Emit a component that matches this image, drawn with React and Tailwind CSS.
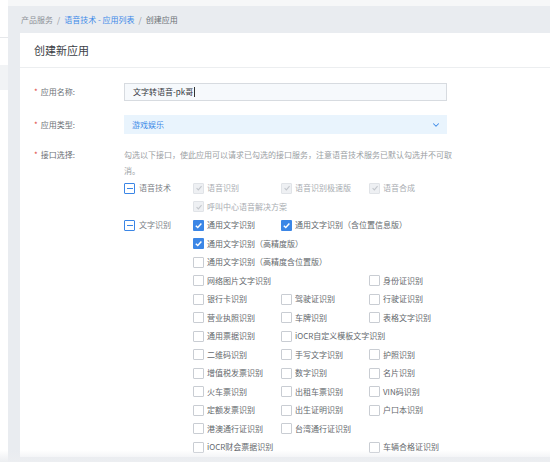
import React from 'react';
import { ChevronDown } from 'lucide-react';

const FONT = { fontFamily: '"Noto Sans CJK SC", "Noto Sans", sans-serif' };

// s: 'on' checked, 'off' unchecked, 'dis' disabled+checked
const VOICE = [
  [{ t: '语音识别', s: 'dis' }, { t: '语音识别极速版', s: 'dis' }, { t: '语音合成', s: 'dis' }],
  [{ t: '呼叫中心语音解决方案', s: 'dis' }, null, null],
];

const OCR = [
  [{ t: '通用文字识别', s: 'on' }, { t: '通用文字识别（含位置信息版）', s: 'on' }, null],
  [{ t: '通用文字识别（高精度版）', s: 'on' }, null, null],
  [{ t: '通用文字识别（高精度含位置版）', s: 'off' }, null, null],
  [{ t: '网络图片文字识别', s: 'off' }, null, { t: '身份证识别', s: 'off' }],
  [{ t: '银行卡识别', s: 'off' }, { t: '驾驶证识别', s: 'off' }, { t: '行驶证识别', s: 'off' }],
  [{ t: '营业执照识别', s: 'off' }, { t: '车牌识别', s: 'off' }, { t: '表格文字识别', s: 'off' }],
  [{ t: '通用票据识别', s: 'off' }, { t: 'iOCR自定义模板文字识别', s: 'off' }, null],
  [{ t: '二维码识别', s: 'off' }, { t: '手写文字识别', s: 'off' }, { t: '护照识别', s: 'off' }],
  [{ t: '增值税发票识别', s: 'off' }, { t: '数字识别', s: 'off' }, { t: '名片识别', s: 'off' }],
  [{ t: '火车票识别', s: 'off' }, { t: '出租车票识别', s: 'off' }, { t: 'VIN码识别', s: 'off' }],
  [{ t: '定额发票识别', s: 'off' }, { t: '出生证明识别', s: 'off' }, { t: '户口本识别', s: 'off' }],
  [{ t: '港澳通行证识别', s: 'off' }, { t: '台湾通行证识别', s: 'off' }, null],
  [{ t: 'iOCR财会票据识别', s: 'off' }, null, { t: '车辆合格证识别', s: 'off' }],
];

function Box({ s }) {
  if (s === 'on') {
    return (
      <span className="w-[11px] h-[11px] shrink-0 rounded-[1px] bg-[#3b86e6] flex items-center justify-center">
        <svg viewBox="0 0 10 10" className="w-[9px] h-[9px]">
          <path d="M2 5.2 L4.2 7.3 L8.2 2.8" fill="none" stroke="#fff" strokeWidth="1.6" />
        </svg>
      </span>
    );
  }
  if (s === 'dis') {
    return (
      <span className="w-[11px] h-[11px] shrink-0 rounded-[1px] bg-[#eef0f3] border border-[#e0e3e7] flex items-center justify-center">
        <svg viewBox="0 0 10 10" className="w-[8px] h-[8px]">
          <path d="M2 5.2 L4.2 7.3 L8.2 2.8" fill="none" stroke="#c3c7cc" strokeWidth="1.4" />
        </svg>
      </span>
    );
  }
  return <span className="w-[11px] h-[11px] shrink-0 rounded-[1px] border border-[#c9cdd3] bg-white" />;
}

function Item({ it }) {
  if (!it) return <div />;
  return (
    <div className="flex items-center gap-[3px] whitespace-nowrap">
      <Box s={it.s} />
      <span className={it.s === 'dis' ? 'text-[#a8acb1]' : 'text-[#63676c]'}>{it.t}</span>
    </div>
  );
}

function Group({ name, rows }) {
  return (
    <div className="flex">
      <div className="w-[69px] shrink-0 h-[18.5px] flex items-center gap-[4px]">
        <span className="w-[11px] h-[11px] border border-[#3b86e6] rounded-[1px] flex items-center justify-center">
          <span className="w-[6px] h-[1.5px] bg-[#3b86e6]" />
        </span>
        <span className="text-[#7b8086]">{name}</span>
      </div>
      <div className="flex flex-col">
        {rows.map((r, i) => (
          <div key={i} className="grid grid-cols-[88px_88px_88px] h-[18.5px] shrink-0 items-center">
            {r.map((it, j) => <Item key={j} it={it} />)}
          </div>
        ))}
      </div>
    </div>
  );
}

function Label({ children }) {
  return (
    <div className="w-[90px] shrink-0 flex items-center text-[#6b7076]">
      <span className="text-[#e0473f] mr-[3px]">*</span>
      {children}
    </div>
  );
}

export default function App() {
  return (
    <div className="relative w-[550px] h-[462px] overflow-hidden flex bg-[#e9ecf0] text-[8px]" style={FONT}>
      {/* sidebar sliver */}
      <div className="w-[8px] shrink-0 bg-white flex flex-col">
        <div className="h-[38px] shrink-0 border-b border-[#e6e8eb]" />
        <div className="h-[27px] shrink-0" />
        <div className="h-[25px] shrink-0 bg-[#f1f3f5]" />
      </div>

      <div className="flex-1 flex flex-col min-w-0">
        <div className="h-[6px] shrink-0 bg-[#f6f7f8]" />
        <div className="h-[27px] shrink-0 flex items-center pl-[13px] gap-[4px] text-[#8d9197]">
          <span>产品服务</span>
          <span>/</span>
          <span className="text-[#3d8ae8]">语音技术 - 应用列表</span>
          <span>/</span>
          <span className="text-[#6b7076]">创建应用</span>
        </div>

        <div className="ml-[12px] shrink-0 bg-white">
          <div className="h-[35px] flex items-center pl-[14px] border-b border-[#eceef0] text-[11px] text-[#3c4046]">
            创建新应用
          </div>

          <div className="pl-[14px] pt-[15px] flex flex-col">
            <div className="flex h-[18px] shrink-0">
              <Label>应用名称:</Label>
              <div className="w-[323px] border border-[#d7dbe0] bg-[#f6f9fc] flex items-center pl-[8px] text-[#33373c]">
                文字转语音-pk哥<span className="w-[1px] h-[10px] bg-[#333] ml-[1px]" />
              </div>
            </div>

            <div className="flex h-[19px] shrink-0 mt-[14px]">
              <Label>应用类型:</Label>
              <div className="w-[323px] bg-[#e9f4fd] flex items-center justify-between pl-[8px] pr-[6px] text-[#3d8ae8]">
                游戏娱乐
                <ChevronDown className="w-[10px] h-[10px] text-[#3d8ae8]" strokeWidth={2.5} />
              </div>
            </div>

            <div className="flex mt-[13px]">
              <div className="w-[90px] shrink-0 h-[16px] flex items-center text-[#6b7076]">
                <span className="text-[#e0473f] mr-[3px]">*</span>
                接口选择:
              </div>
              <div className="flex flex-col">
                <p className="w-[330px] leading-[16px] text-[#9a9ea3]">
                  勾选以下接口，使此应用可以请求已勾选的接口服务，注意语音技术服务已默认勾选并不可取消。
                </p>
                <div className="flex flex-col">
                  <Group name="语音技术" rows={VOICE} />
                  <Group name="文字识别" rows={OCR} />
                </div>
              </div>
            </div>
          </div>
        </div>
      </div>

      {/* bottom fade over scrolled content */}
      <div className="absolute left-0 right-0 bottom-0 h-[12px] bg-gradient-to-b from-transparent to-[#eceef1]" />
    </div>
  );
}
